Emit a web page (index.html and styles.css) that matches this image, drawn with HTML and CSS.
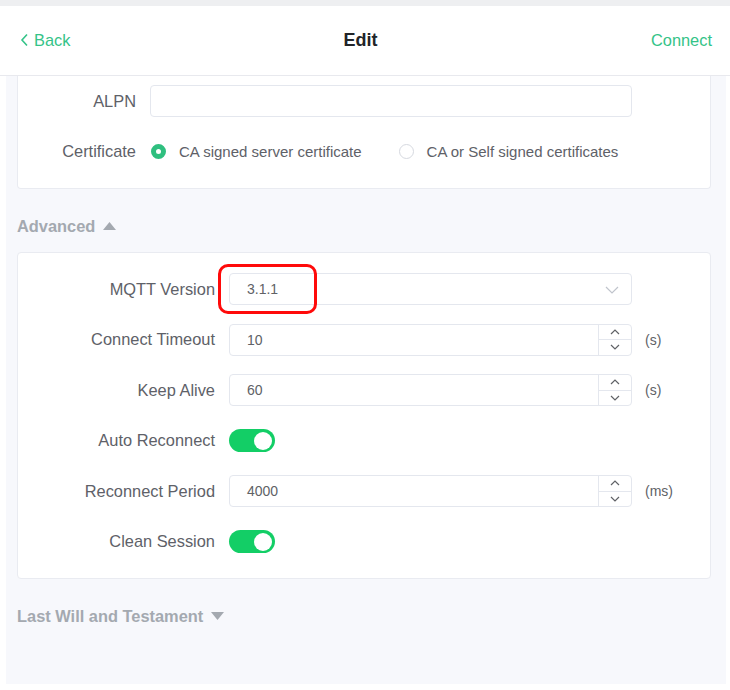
FILE: index.html
```html
<!DOCTYPE html>
<html>
<head>
<meta charset="utf-8">
<link rel="stylesheet" href="styles.css">
</head>
<body>
<div class="topbar"></div>
<header class="header">
  <a class="back"><svg class="back-icon" width="9" height="14" viewBox="0 0 9 14"><path d="M7 1.5 L2 7 L7 12.5" fill="none" stroke="#34c388" stroke-width="1.6"/></svg>Back</a>
  <div class="title">Edit</div>
  <a class="connect">Connect</a>
</header>
<main class="content">
  <section class="card card-first">
    <div class="row row-narrow">
      <label class="label">ALPN</label>
      <div class="field"><div class="input"></div></div>
    </div>
    <div class="row row-narrow">
      <label class="label">Certificate</label>
      <div class="field field-wide radios">
        <span class="radio"><span class="radio-dot checked"></span><span class="radio-text">CA signed server certificate</span></span>
        <span class="radio"><span class="radio-dot"></span><span class="radio-text">CA or Self signed certificates</span></span>
      </div>
    </div>
  </section>

  <h3 class="section-title">Advanced <svg class="tri" width="13" height="8" viewBox="0 0 13 8"><path d="M6.5 0 L13 8 L0 8 Z" fill="#a4a9b0"/></svg></h3>

  <section class="card card-adv">
    <div class="row">
      <label class="label">MQTT Version</label>
      <div class="field">
        <div class="input select"><span class="value">3.1.1</span>
          <svg class="chev" width="14" height="8" viewBox="0 0 14 8"><path d="M1 1 L7 7 L13 1" fill="none" stroke="#c0c4cc" stroke-width="1.2"/></svg>
        </div>
        <div class="highlight"></div>
      </div>
    </div>
    <div class="row">
      <label class="label">Connect Timeout</label>
      <div class="field">
        <div class="input number"><span class="value">10</span>
          <div class="steps">
            <span class="step"><svg width="10" height="6" viewBox="0 0 10 6"><path d="M1 5 L5 1 L9 5" fill="none" stroke="#606266" stroke-width="1.2"/></svg></span>
            <span class="step"><svg width="10" height="6" viewBox="0 0 10 6"><path d="M1 1 L5 5 L9 1" fill="none" stroke="#606266" stroke-width="1.2"/></svg></span>
          </div>
        </div>
      </div>
      <span class="unit">(s)</span>
    </div>
    <div class="row">
      <label class="label">Keep Alive</label>
      <div class="field">
        <div class="input number"><span class="value">60</span>
          <div class="steps">
            <span class="step"><svg width="10" height="6" viewBox="0 0 10 6"><path d="M1 5 L5 1 L9 5" fill="none" stroke="#606266" stroke-width="1.2"/></svg></span>
            <span class="step"><svg width="10" height="6" viewBox="0 0 10 6"><path d="M1 1 L5 5 L9 1" fill="none" stroke="#606266" stroke-width="1.2"/></svg></span>
          </div>
        </div>
      </div>
      <span class="unit">(s)</span>
    </div>
    <div class="row">
      <label class="label">Auto Reconnect</label>
      <div class="field"><span class="switch"><span class="knob"></span></span></div>
    </div>
    <div class="row">
      <label class="label">Reconnect Period</label>
      <div class="field">
        <div class="input number"><span class="value">4000</span>
          <div class="steps">
            <span class="step"><svg width="10" height="6" viewBox="0 0 10 6"><path d="M1 5 L5 1 L9 5" fill="none" stroke="#606266" stroke-width="1.2"/></svg></span>
            <span class="step"><svg width="10" height="6" viewBox="0 0 10 6"><path d="M1 1 L5 5 L9 1" fill="none" stroke="#606266" stroke-width="1.2"/></svg></span>
          </div>
        </div>
      </div>
      <span class="unit">(ms)</span>
    </div>
    <div class="row">
      <label class="label">Clean Session</label>
      <div class="field"><span class="switch"><span class="knob"></span></span></div>
    </div>
  </section>

  <h3 class="section-title">Last Will and Testament <svg class="tri" width="13" height="8" viewBox="0 0 13 8"><path d="M0 0 L13 0 L6.5 8 Z" fill="#a4a9b0"/></svg></h3>
</main>
</body>
</html>
```

FILE: styles.css
```css
* { box-sizing: border-box; }
html, body { margin: 0; padding: 0; background: #ffffff; }
body {
  font-family: "Liberation Sans", Arial, Helvetica, sans-serif;
  color: #606266;
  width: 730px;
  height: 690px;
  overflow: hidden;
}
.topbar { height: 6px; background: #eeeff1; }
.header {
  height: 70px;
  border-bottom: 1px solid #e8e9ee;
  display: grid;
  grid-template-columns: 1fr auto 1fr;
  align-items: center;
  padding: 0 18px 0 20px;
  background: #fff;
}
.back, .connect { color: #34c388; font-size: 16.4px; }
.back { display: flex; align-items: center; gap: 5px; }
.back-icon { display: block; margin-top: -1px; }
.connect { justify-self: end; }
.title { font-size: 18px; font-weight: bold; color: #222428; margin-right: 11px; }

.content {
  margin: 0 4px 0 6px;
  padding: 0 15px 0 11px;
  background: #f7f8fc;
  height: 608px;
  overflow: hidden;
}
.card {
  background: #fff;
  border: 1px solid #e9ebf1;
  border-radius: 4px;
  padding: 20px 20px;
  display: flex;
  flex-direction: column;
  gap: 18px;
}
.card-first {
  border-top: 0;
  border-radius: 0 0 4px 4px;
  padding-top: 9px;
  padding-bottom: 21px;
}
.card-adv { gap: 18.5px; padding-bottom: 20px; }
.row {
  display: grid;
  grid-template-columns: 191px 1fr 58px;
  align-items: center;
  height: 32px;
}
.row-narrow { grid-template-columns: 112px 1fr 58px; }
.label {
  text-align: right;
  padding-right: 14px;
  font-size: 16.4px;
  color: #5e6168;
  white-space: nowrap;
}
.field { position: relative; height: 32px; display: flex; align-items: center; }
.field-wide { grid-column: 2 / 4; }
.input {
  width: 100%;
  height: 32px;
  border: 1px solid #e4e7ee;
  border-radius: 4px;
  background: #fff;
  display: flex;
  align-items: center;
  font-size: 14px;
  color: #606266;
  position: relative;
}
.value { padding-left: 17px; }
.chev { position: absolute; right: 12px; top: 12px; }
.steps {
  position: absolute;
  right: 0; top: 0; bottom: 0;
  width: 33px;
  border-left: 1px solid #e4e7ee;
  display: flex;
  flex-direction: column;
}
.step { flex: 1; display: flex; align-items: center; justify-content: center; }
.step:first-child { border-bottom: 1px solid #e4e7ee; }
.unit { padding-left: 13px; font-size: 14px; color: #606266; }

.radios { gap: 36px; }
.radio { display: flex; align-items: center; gap: 13px; font-size: 15px; color: #5e6168; white-space: nowrap; }
.radio-dot {
  width: 15px; height: 15px;
  border-radius: 50%;
  border: 1px solid #d6d9e0;
  background: #fff;
  margin-left: 1px;
}
.radio-dot.checked {
  border: 5px solid #2fbf7f;
  background: #fff;
}

.switch {
  width: 46px; height: 23px;
  border-radius: 12px;
  background: #13ce66;
  position: relative;
  display: block;
}
.knob {
  position: absolute;
  right: 3px; top: 2.5px;
  width: 18px; height: 18px;
  border-radius: 50%;
  background: #fff;
}
.highlight {
  position: absolute;
  left: -11px; top: -9px;
  width: 99px; height: 50px;
  border: 3px solid #ff0a0a;
  border-radius: 10px;
  pointer-events: none;
}
.section-title {
  margin: 27px 0 16px;
  font-size: 16.4px;
  line-height: 20px;
  font-weight: bold;
  color: #a4a9b0;
  display: flex;
  align-items: center;
  gap: 8px;
}
.tri { display: block; }
```
